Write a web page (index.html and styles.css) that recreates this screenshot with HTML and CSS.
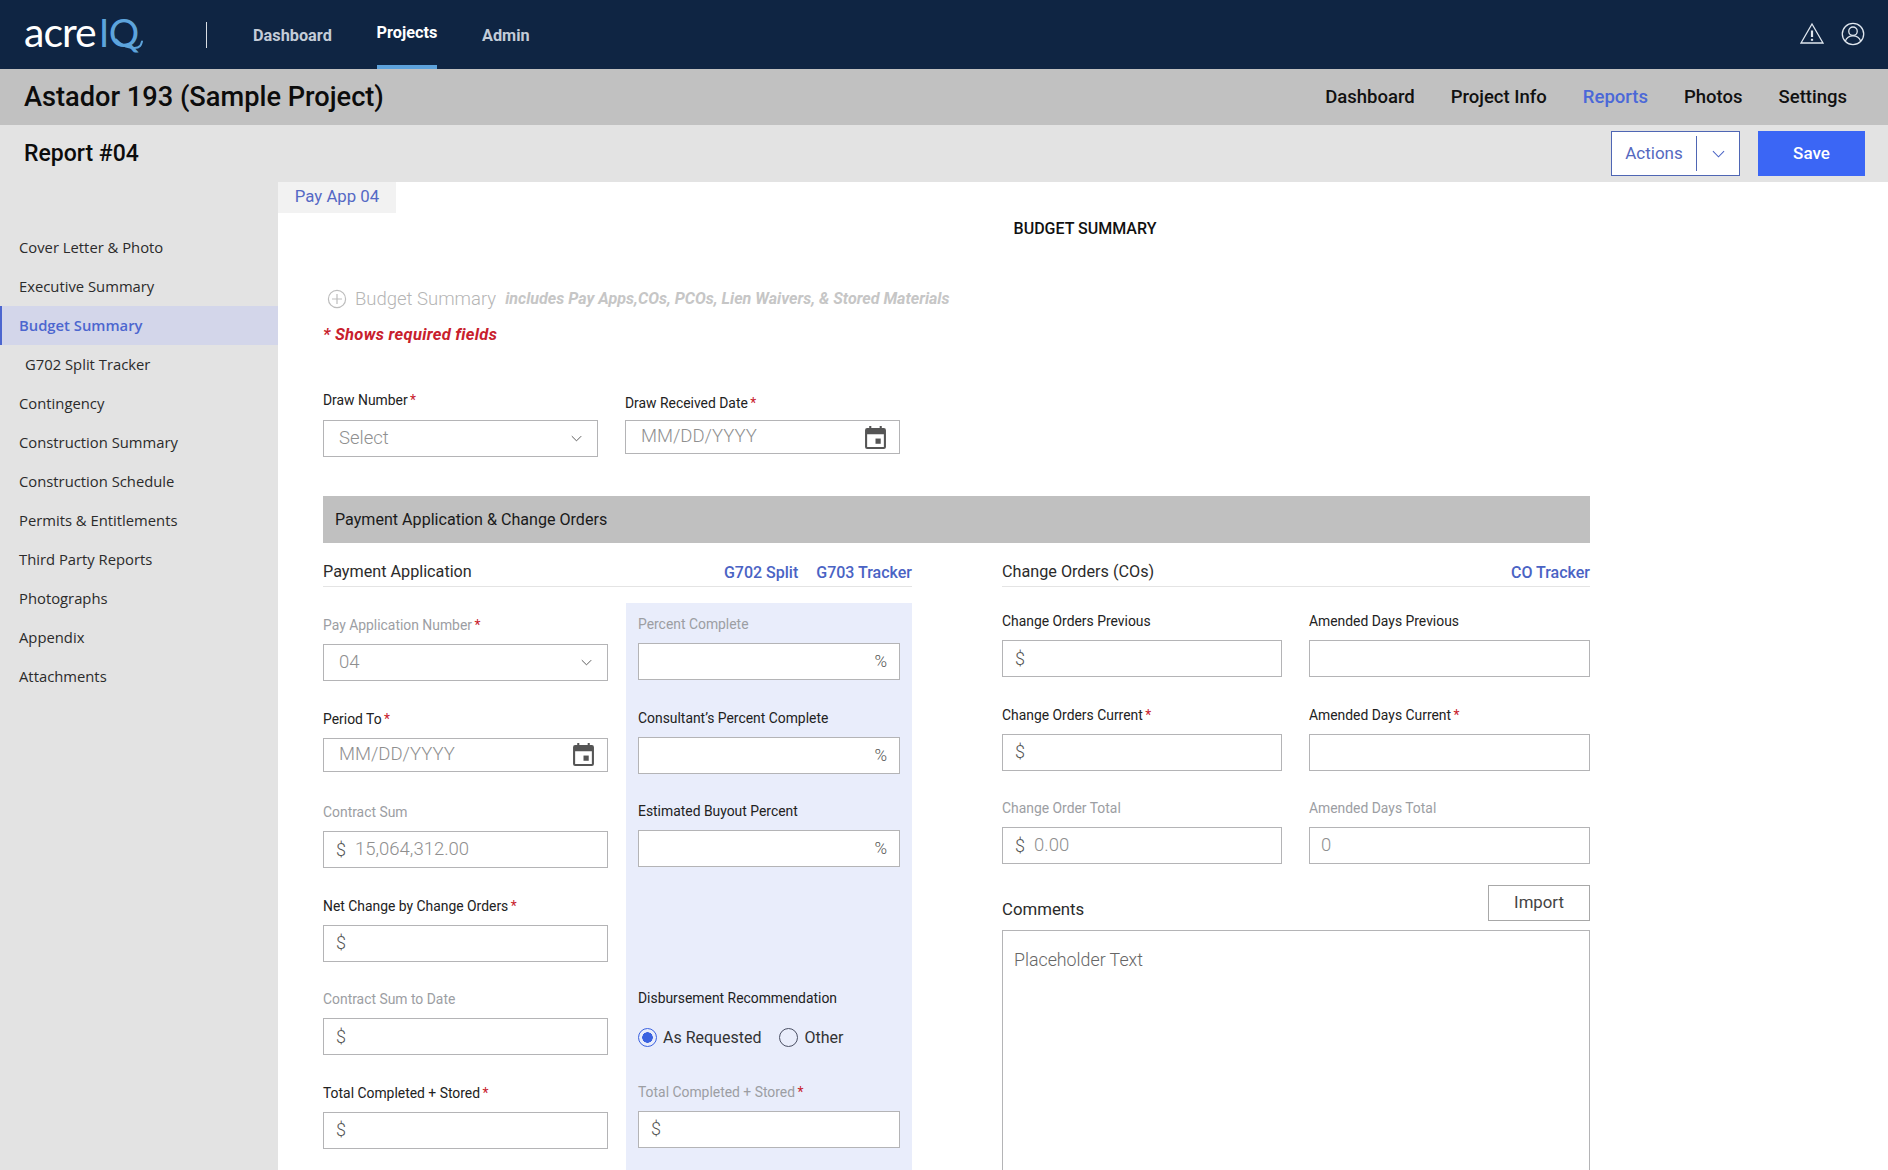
FILE: index.html
```html
<!DOCTYPE html>
<html lang="en">
<head>
<meta charset="utf-8">
<title>Report #04</title>
<link rel="stylesheet" href="styles.css">
</head>
<body>
<header class="topnav">
  <div class="logo"><span class="logo-acre">acre</span><span class="logo-iq">IQ</span>
    <svg class="logo-tail" viewBox="0 0 30 12" aria-hidden="true"><path d="M1 1.500C5 6 10 8.500 15 9.500c4 .8 8 .8 10-1.500 1-1 1.500-2.500 2-4.500" fill="none" stroke="#5da4dc" stroke-width="2" stroke-linecap="round"/></svg>
  </div>
  <span class="nav-divider"></span>
  <nav class="topnav-links">
    <a class="topnav-link">Dashboard</a>
    <a class="topnav-link is-active">Projects</a>
    <a class="topnav-link">Admin</a>
  </nav>
  <div class="topnav-icons">
    <svg class="icon-alert" viewBox="0 0 24 24" aria-hidden="true"><path d="M12 3 23 22H1Z" fill="none" stroke="#dfe6ee" stroke-width="1.3"/><path d="M12 9.500v6.500" stroke="#dfe6ee" stroke-width="2.200"/><path d="M12 17.800v2" stroke="#dfe6ee" stroke-width="2.200"/></svg>
    <svg class="icon-user" viewBox="0 0 26 26" aria-hidden="true"><circle cx="13" cy="13" r="11.600" fill="none" stroke="#dfe6ee" stroke-width="1.400"/><circle cx="13" cy="10" r="4.600" fill="none" stroke="#dfe6ee" stroke-width="1.400"/><path d="M4.600 21c1.400-4 4.600-6 8.400-6s7 2 8.400 6" fill="none" stroke="#dfe6ee" stroke-width="1.400"/></svg>
  </div>
</header>

<div class="project-bar">
  <h1 class="project-title">Astador 193 (Sample Project)</h1>
  <nav class="project-links">
    <a class="project-link">Dashboard</a>
    <a class="project-link">Project Info</a>
    <a class="project-link is-active">Reports</a>
    <a class="project-link">Photos</a>
    <a class="project-link">Settings</a>
  </nav>
</div>

<div class="report-bar">
  <h2 class="report-title">Report #04</h2>
  <div class="report-actions">
    <div class="actions-btn"><span class="actions-text">Actions</span><span class="actions-caret"><svg class="chev-blue" viewBox="0 0 14 8" aria-hidden="true"><path d="M1 1l6 6 6-6" fill="none" stroke="#4a63c4" stroke-width="1.100"/></svg></span></div>
    <button class="save-btn">Save</button>
  </div>
</div>

<div class="workspace">
  <aside class="sidebar">
    <a class="side-link">Cover Letter &amp; Photo</a>
    <a class="side-link">Executive Summary</a>
    <a class="side-link is-active">Budget Summary</a>
    <a class="side-link is-sub">G702 Split Tracker</a>
    <a class="side-link">Contingency</a>
    <a class="side-link">Construction Summary</a>
    <a class="side-link">Construction Schedule</a>
    <a class="side-link">Permits &amp; Entitlements</a>
    <a class="side-link">Third Party Reports</a>
    <a class="side-link">Photographs</a>
    <a class="side-link">Appendix</a>
    <a class="side-link">Attachments</a>
  </aside>

  <main class="main">
    <div class="tab">Pay App 04</div>
    <div class="form-area">
      <h3 class="page-heading">BUDGET SUMMARY</h3>
      <div class="budget-row">
        <svg class="icon-plus" viewBox="0 0 20 20" aria-hidden="true"><circle cx="10" cy="10" r="8.600" fill="none" stroke="#bdbdbd" stroke-width="1.200"/><path d="M10 5v10M5 10h10" stroke="#bdbdbd" stroke-width="1.200"/></svg>
        <span class="budget-name">Budget Summary</span>
        <span class="budget-hint">includes Pay Apps,COs, PCOs, Lien Waivers, &amp; Stored Materials</span>
      </div>
      <p class="required-note">* Shows required fields</p>

      <div class="draw-row">
        <div class="draw-field">
          <label class="label draw-label">Draw Number <span class="req">*</span></label>
          <div class="input input-tall"><span class="ph">Select</span><svg class="chev" viewBox="0 0 14 8" aria-hidden="true"><path d="M1 1l6 6 6-6" fill="none" stroke="#555" stroke-width="1.200"/></svg></div>
        </div>
        <div class="draw-field">
          <label class="label draw-label draw-label-low">Draw Received Date <span class="req">*</span></label>
          <div class="input input-short"><span class="ph">MM/DD/YYYY</span><svg class="icon-cal" viewBox="0 0 20 22" aria-hidden="true"><path d="M4 0h2v3H4zM14 0h2v3h-2z" fill="#555"/><path d="M2 2h16a2 2 0 0 1 2 2v16a2 2 0 0 1-2 2H2a2 2 0 0 1-2-2V4a2 2 0 0 1 2-2Zm0 6v12h16V8Z" fill="#555"/><path d="M10 12h5v5h-5z" fill="#555"/></svg></div>
        </div>
      </div>

      <div class="section-bar">Payment Application &amp; Change Orders</div>

      <div class="columns">
        <section class="col-left">
          <div class="subhead"><span class="subhead-title">Payment Application</span><span class="subhead-links"><a class="link">G702 Split</a><a class="link">G703 Tracker</a></span></div>
          <div class="pay-cols">
            <div class="field-stack stack-pay">
              <div class="field"><label class="label is-muted">Pay Application Number <span class="req">*</span></label><div class="input input-tall"><span class="ph">04</span><svg class="chev" viewBox="0 0 14 8" aria-hidden="true"><path d="M1 1l6 6 6-6" fill="none" stroke="#555" stroke-width="1.200"/></svg></div></div>
              <div class="field"><label class="label">Period To <span class="req">*</span></label><div class="input input-short"><span class="ph">MM/DD/YYYY</span><svg class="icon-cal" viewBox="0 0 20 22" aria-hidden="true"><path d="M4 0h2v3H4zM14 0h2v3h-2z" fill="#555"/><path d="M2 2h16a2 2 0 0 1 2 2v16a2 2 0 0 1-2 2H2a2 2 0 0 1-2-2V4a2 2 0 0 1 2-2Zm0 6v12h16V8Z" fill="#555"/><path d="M10 12h5v5h-5z" fill="#555"/></svg></div></div>
              <div class="field"><label class="label is-muted">Contract Sum</label><div class="input input-tall input-money"><span class="unit">$</span><span class="ph">15,064,312.00</span></div></div>
              <div class="field"><label class="label">Net Change by Change Orders <span class="req">*</span></label><div class="input input-tall input-money"><span class="unit">$</span></div></div>
              <div class="field"><label class="label is-muted">Contract Sum to Date</label><div class="input input-tall input-money"><span class="unit">$</span></div></div>
              <div class="field"><label class="label">Total Completed + Stored <span class="req">*</span></label><div class="input input-tall input-money"><span class="unit">$</span></div></div>
            </div>
            <div class="panel">
              <div class="field-stack">
                <div class="field"><label class="label is-muted">Percent Complete</label><div class="input input-tall input-pct"><span class="unit">%</span></div></div>
                <div class="field"><label class="label">Consultant’s Percent Complete</label><div class="input input-tall input-pct"><span class="unit">%</span></div></div>
                <div class="field"><label class="label">Estimated Buyout Percent</label><div class="input input-tall input-pct"><span class="unit">%</span></div></div>
                <div class="field"></div>
                <div class="field"><label class="label">Disbursement Recommendation</label>
                  <div class="radios">
                    <span class="radio-item"><span class="radio is-on"></span>As Requested</span>
                    <span class="radio-item"><span class="radio"></span>Other</span>
                  </div>
                </div>
                <div class="field"><label class="label is-muted">Total Completed + Stored <span class="req">*</span></label><div class="input input-tall input-money"><span class="unit">$</span></div></div>
              </div>
            </div>
          </div>
        </section>

        <section class="col-right">
          <div class="subhead"><span class="subhead-title">Change Orders (COs)</span><span class="subhead-links"><a class="link">CO Tracker</a></span></div>
          <div class="co-grid">
            <div class="field"><label class="label">Change Orders Previous</label><div class="input input-tall input-money"><span class="unit">$</span></div></div>
            <div class="field"><label class="label">Amended Days Previous</label><div class="input input-tall"></div></div>
            <div class="field"><label class="label">Change Orders Current <span class="req">*</span></label><div class="input input-tall input-money"><span class="unit">$</span></div></div>
            <div class="field"><label class="label">Amended Days Current <span class="req">*</span></label><div class="input input-tall"></div></div>
            <div class="field"><label class="label is-muted">Change Order Total</label><div class="input input-tall input-money"><span class="unit">$</span><span class="ph">0.00</span></div></div>
            <div class="field"><label class="label is-muted">Amended Days Total</label><div class="input input-tall input-plain"><span class="ph">0</span></div></div>
          </div>
          <div class="comments-head"><span class="comments-title">Comments</span><button class="import-btn">Import</button></div>
          <div class="comments-box">Placeholder Text</div>
        </section>
      </div>
    </div>
  </main>
</div>
</body>
</html>
```
FILE: styles.css
```css
* { box-sizing: border-box; }
html, body { margin: 0; padding: 0; }
html { overflow: hidden; }
body {
  width: 1888px;
  height: 1170px;
  overflow: hidden;
  font-family: Roboto, "Liberation Sans", sans-serif;
  color: #111;
  background: #fff;
  display: flex;
  flex-direction: column;
}
h1, h2, h3, p { margin: 0; }

.topnav {
  height: 69px;
  flex: none;
  background: #0f2543;
  display: flex;
  align-items: center;
  padding: 0 23px 0 24px;
}
.logo { width: 182px; display: flex; align-items: baseline; position: relative; height: 46px; line-height: 46px; margin-top: -5px; }
.logo-acre { font-family: Lato, sans-serif; font-weight: 400; font-size: 41px; color: #fff; letter-spacing: -1px; }
.logo-iq { font-family: Lato, sans-serif; font-weight: 400; font-size: 38px; color: #5da4dc; margin-left: 3px; letter-spacing: -.5px; }
.logo-tail { position: absolute; left: 91px; top: 29px; width: 30px; height: 12px; overflow: visible; }
.nav-divider { width: 1px; height: 26px; background: #d8dde4; flex: none; }
.topnav-links { display: flex; align-self: stretch; margin-left: 46px; gap: 44.700px; }
.topnav-link { font-size: 16.300px; font-weight: 700; color: #c3ccd8; display: flex; align-items: center; padding-top: 1px; }
.topnav-link.is-active { color: #fff; box-shadow: inset 0 -4px 0 #5da2db; padding: 0 0 5px; }
.topnav-icons { margin-left: auto; display: flex; align-items: center; gap: 17px; }
.icon-alert { width: 24px; height: 24px; margin-bottom: 4px; }
.icon-user { width: 24px; height: 24px; margin-bottom: 1px; }

.project-bar {
  height: 56px;
  flex: none;
  background: #c1c1c1;
  display: flex;
  align-items: center;
  justify-content: space-between;
  padding: 0 41px 0 24px;
}
.project-title { font-size: 27.200px; font-weight: 500; color: #0c0c0c; }
.project-links { display: flex; gap: 36px; }
.project-link { font-size: 18.500px; font-weight: 500; color: #111; padding-bottom: 1px; }
.project-link.is-active { color: #4b68d8; }

.report-bar {
  height: 57px;
  flex: none;
  background: #e3e3e3;
  display: flex;
  align-items: center;
  justify-content: space-between;
  padding: 0 23px 0 24px;
}
.report-title { font-size: 23px; font-weight: 500; color: #0c0c0c; }
.report-actions { display: flex; gap: 18px; }
.actions-btn { width: 129px; height: 45px; background: #fff; border: 1px solid #4f66b4; display: flex; align-items: center; }
.actions-text { width: 85px; text-align: center; font-size: 17px; color: #5569bf; border-right: 1px solid #4f66b4; line-height: 35px; }
.actions-caret { flex: 1; display: flex; align-items: center; justify-content: center; }
.chev-blue { width: 13px; height: 8px; }
.save-btn { width: 107px; height: 45px; background: #3b66f5; border: 0; color: #fff; font: 500 17px Roboto, sans-serif; padding: 0 0 2px; }

.workspace { flex: 1; display: flex; min-height: 0; overflow: hidden; }
.sidebar { width: 278px; flex: none; background: #e3e3e3; padding-top: 45.500px; display: flex; flex-direction: column; }
.side-link { height: 39px; display: flex; align-items: center; padding-left: 19px; font-family: "Open Sans", sans-serif; font-size: 14.800px; color: #2b2b2b; flex: none; }
.side-link.is-active { background: #d3d6ea; color: #4c66cf; font-weight: 600; box-shadow: inset 2px 0 0 #4c66cf; }
.side-link.is-sub { padding-left: 25px; }

.main { flex: 1; min-width: 0; }
.tab { width: 118px; height: 31px; background: #f2f2f2; color: #5569c5; font-size: 16.800px; text-align: center; line-height: 29px; }
.form-area { padding-left: 45px; width: 1312px; }
.page-heading { width: 1614px; margin-left: -45px; text-align: center; font-size: 16px; font-weight: 500; line-height: 20px; margin-top: 6px; color: #111; }
.budget-row { display: flex; align-items: center; height: 24px; margin-top: 48px; padding-left: 4px; white-space: nowrap; }
.icon-plus { width: 20px; height: 20px; flex: none; }
.budget-name { font-size: 18.500px; font-weight: 300; color: #b5b5b5; margin-left: 8px; }
.budget-hint { font-size: 16.100px; font-weight: 700; font-style: italic; color: #c6c6c6; margin-left: 9px; padding-bottom: 1px; }
.required-note { font-size: 16.500px; letter-spacing: .3px; font-weight: 700; font-style: italic; color: #c8202c; line-height: 20px; margin-top: 14px; }

.label { display: block; font-size: 13.900px; line-height: 18px; color: #222; margin-bottom: 10px; white-space: nowrap; }
.label.is-muted { color: #9c9ea3; }
.req { color: #c8202c; margin-left: -1px; }

.draw-row { display: flex; gap: 27px; margin-top: 46px; align-items: flex-start; }
.draw-field { width: 275px; }
.draw-label { margin-bottom: 11px; }
.draw-label-low { padding-top: 3px; margin-bottom: 8px; }

.input { display: flex; align-items: center; background: #fff; border: 1px solid #b4b4b6; padding: 0 15px; font-size: 18.500px; }
.input-tall { height: 37px; }
.input-short { height: 34px; }
.input-money { padding-left: 12px; }
.input-plain { padding-left: 11px; }
.input-pct { justify-content: flex-end; padding-right: 12px; }
.ph { font-weight: 300; color: #8f8f8f; white-space: nowrap; padding-bottom: 2px; }
.unit { font-weight: 300; color: #555; margin-right: 9px; padding-bottom: 1px; font-size: 18px; }
.input-pct .unit { margin-right: 0; font-size: 17px; padding-bottom: 1px; }
.chev { width: 11px; height: 7px; margin-left: auto; margin-right: 0; }
.icon-cal { width: 21px; height: 23px; margin-left: auto; margin-right: -2px; }

.section-bar { margin-top: 39px; height: 47px; background: #c0c0c0; display: flex; align-items: center; padding-left: 12px; font-size: 16.100px; color: #1a1a1a; }

.columns { display: flex; gap: 90px; }
.col-left { width: 589px; flex: none; }
.col-right { width: 588px; flex: none; }
.subhead { height: 44px; border-bottom: 1px solid #e4e4e4; display: flex; align-items: center; justify-content: space-between; padding-top: 14px; }
.subhead-title { font-size: 16.200px; color: #2b2b2b; }
.subhead-links { display: flex; gap: 18px; padding-top: 2px; }
.link { font-size: 16px; font-weight: 500; color: #4a63c4; }

.pay-cols { display: flex; gap: 18px; margin-top: 16px; }
.stack-pay { width: 285px; flex: none; padding-top: 13px; }
.panel { flex: 1; background: #e9edfb; padding: 12px 12px 0; height: 568px; }
.field-stack { display: flex; flex-direction: column; gap: 28px; }
.field { height: 65.600px; }

.radios { display: flex; gap: 18px; height: 30px; align-items: center; margin-top: 15px; }
.radio-item { display: flex; align-items: center; gap: 6px; font-size: 16px; color: #333; }
.radio { width: 19px; height: 19px; border: 1.500px solid #4a4f63; border-radius: 50%; }
.radio.is-on { border-color: #3b62e0; background: radial-gradient(circle, #3b62e0 0 5px, transparent 5.500px); }

.co-grid { display: grid; grid-template-columns: 280px 281px; column-gap: 27px; row-gap: 28px; margin-top: 25px; }
.comments-head { display: flex; align-items: flex-end; justify-content: space-between; margin-top: 20px; height: 36px; }
.comments-title { font-size: 16.800px; color: #2b2b2b; line-height: 22px; margin-bottom: 1px; }
.import-btn { width: 102px; height: 36px; background: #fff; border: 1px solid #a8a8a8; font: 400 16.800px Roboto, sans-serif; color: #444; padding: 0 0 2px; }
.comments-box { margin-top: 9px; height: 241px; border: 1px solid #b4b4b6; padding: 18px 11px; font-size: 17.800px; font-weight: 300; color: #666; }
```
